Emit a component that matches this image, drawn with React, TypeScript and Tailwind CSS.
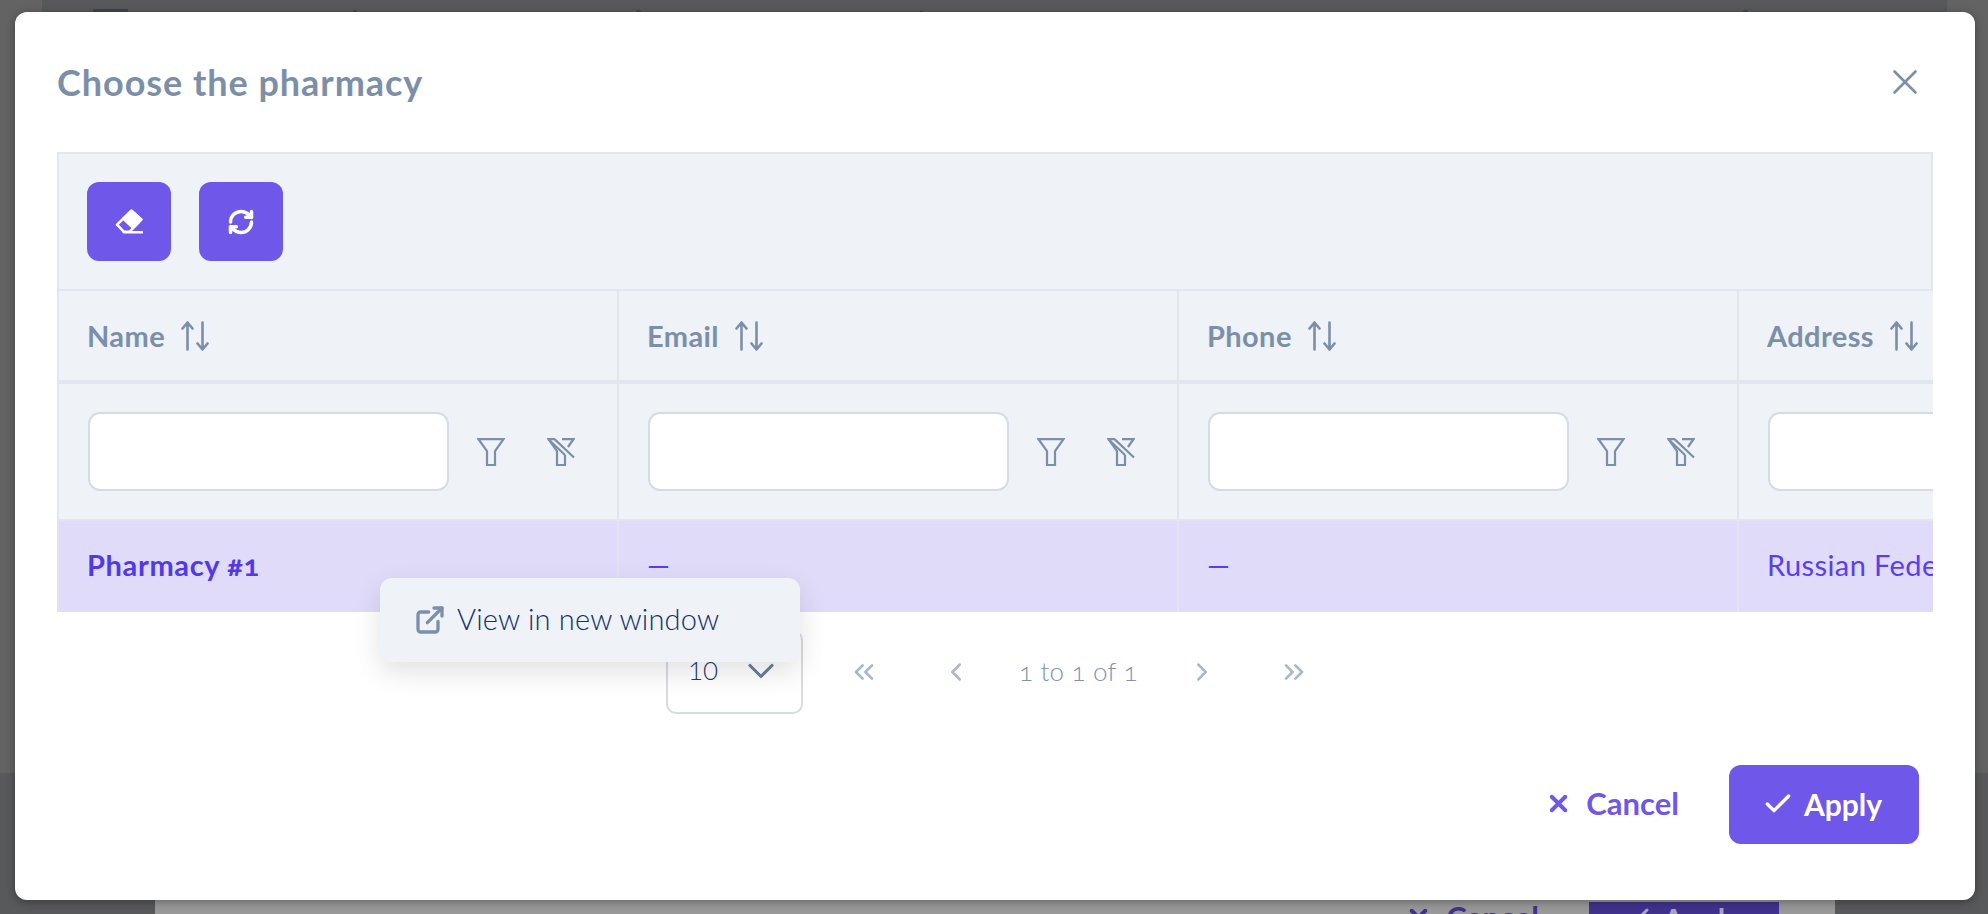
import { Check, ChevronDown, ChevronLeft, ChevronRight, ChevronsLeft, ChevronsRight, ExternalLink, RefreshCw, X } from "lucide-react"

function EraserIcon() {
  return (
    <svg width="28" height="25" viewBox="0 0 28 25" fill="none" stroke="white" strokeWidth="2.6" strokeLinejoin="round" strokeLinecap="round">
      <path d="M16.5 1.8 L26.2 10.5 L14.5 22.8 L9 22.8 L2 15.6 Z" />
      <path d="M16.5 1.8 L26.2 10.5 L18 18.8 L8.2 9.6 Z" fill="white" />
      <path d="M9 23.2 H27" />
    </svg>
  )
}

function SortIcon() {
  return (
    <svg width="28" height="30" viewBox="0 0 28 30" fill="none" stroke="#7b8fa9" strokeWidth="2.6" strokeLinecap="round" strokeLinejoin="round">
      <path d="M6.5 28.5 V1.5 M1.5 7.5 L6.5 1.5 L11.5 7.5" />
      <path d="M21.5 1.5 V28.5 M16.5 22.5 L21.5 28.5 L26.5 22.5" />
    </svg>
  )
}

function FunnelIcon() {
  return (
    <svg width="28" height="28" viewBox="0 0 28 28" fill="none" stroke="#7b8fa9" strokeWidth="2.2">
      <path d="M1.5 1.2 H26.5 L18 13 V27 H10 V13 Z" />
    </svg>
  )
}

function FunnelOffIcon() {
  return (
    <svg width="28" height="28" viewBox="0 0 28 28" fill="none" stroke="#7b8fa9" strokeWidth="2.2">
      <path d="M15 1.2 H26.5 L21 9" />
      <path d="M18 17 V27 H10 V13 L1.5 1.2 H7.5 L27 19.5" />
      <path d="M1.5 1.2 L18 17" />
    </svg>
  )
}

const columns = [
  { name: "Name", value: "Pharmacy #1" },
  { name: "Email", value: "—" },
  { name: "Phone", value: "—" },
  { name: "Address", value: "Russian Federation" },
]

export default function App() {
  return (
    <div className="relative h-[914px] w-[1988px] overflow-hidden bg-[#58595b] font-['Lato',sans-serif]">
      {/* Page behind the dialogs */}
      <div className="absolute left-0 top-0 h-[773px] w-[42px] bg-[#636363]" />
      <div className="absolute right-0 top-0 h-[773px] w-[41px] bg-[#636363]" />
      <div className="absolute left-[93px] top-[9px] h-[3px] w-[35px] bg-[#3f4350]" />
      <div className="absolute left-[353px] top-[10px] h-[2px] w-[4px] rounded-t-full bg-[#3f4350]" />
      <div className="absolute left-[636px] top-[10px] h-[2px] w-[5px] rounded-t-full bg-[#3f4350]" />
      <div className="absolute left-[920px] top-[11px] h-[1px] w-[3px] bg-[#3f4350]" />
      <div className="absolute left-[1743px] top-[10px] h-[2px] w-[5px] rounded-t-full bg-[#3f4350]" />
      <div className="absolute bottom-0 left-[155px] flex h-[40px] w-[1680px] justify-end bg-[#999999] pr-[56px]">
        <div className="flex items-start gap-[50px] pt-[28px]">
          <div className="flex items-center gap-[14px] text-[31px] font-bold leading-none text-[#40318c]">
            <X size={27} strokeWidth={3.5} />
            Cancel
          </div>
          <div className="flex h-[60px] w-[190px] items-start justify-center gap-3 bg-[#40318c] pt-[2px] text-[30px] font-bold leading-none text-[#a9a3cc]">
            <Check size={24} strokeWidth={3} />
            Apply
          </div>
        </div>
      </div>

      {/* Dialog */}
      <div className="absolute left-[15px] top-[12px] flex h-[888px] w-[1960px] flex-col rounded-[12px] bg-white shadow-[0_2px_10px_rgba(0,0,0,0.35)]">
        <div className="flex h-[140px] shrink-0 items-center justify-between pl-[42px] pr-[49px]">
          <h1 className="text-[36px] font-bold leading-none tracking-[0.95px] text-[#7b8fa9]">Choose the pharmacy</h1>
          <X size={42} strokeWidth={1.5} className="text-[#7b8fa9]" />
        </div>

        <div className="mx-[42px] w-[1876px] shrink-0 overflow-hidden bg-[#eff2f7]">
          {/* Toolbar */}
          <div className="flex h-[139px] items-center gap-[28px] border-2 border-[#e0e7f0] pl-[28px]">
            <button className="flex h-[79px] w-[84px] items-center justify-center rounded-[12px] bg-[#6e57e9]">
              <EraserIcon />
            </button>
            <button className="flex h-[79px] w-[84px] items-center justify-center rounded-[12px] bg-[#6e57e9]">
              <RefreshCw size={28} strokeWidth={3} className="text-white" />
            </button>
          </div>

          <div className="grid w-[2241px] grid-cols-[560px_560px_560px_561px]">
            {columns.map((col) => (
              <div key={col.name} className="flex h-[93px] items-center gap-[16px] border-b-4 border-l-2 border-[#e0e7f0] pl-[28px] text-[29px] font-bold leading-none tracking-[0.4px] text-[#7b8fa9]">
                {col.name}
                <SortIcon />
              </div>
            ))}
            {columns.map((col) => (
              <div key={col.name} className="flex h-[135px] items-center border-l-2 border-[#e0e7f0] pl-[29px]">
                <input className="h-[79px] w-[361px] shrink-0 rounded-[12px] border-2 border-[#d5dce6] bg-white" />
                <div className="ml-[28px]">
                  <FunnelIcon />
                </div>
                <div className="ml-[42px]">
                  <FunnelOffIcon />
                </div>
              </div>
            ))}
            {columns.map((col, i) => (
              <div
                key={col.name}
                className={
                  i === 0
                    ? "flex h-[93px] items-center border-l-2 border-t-2 border-[#e2e4f4] bg-[#e0dbf9] pb-[4px] pl-[28px] text-[29px] font-bold leading-none tracking-[0.65px] text-[#5139e8] oldstyle-nums"
                    : "flex h-[93px] items-center border-l-2 border-t-2 border-[#e2e4f4] bg-[#e0dbf9] pb-[4px] pl-[28px] text-[29px] leading-none tracking-[0.4px] text-[#5a3fe8]"
                }
              >
                <span className="whitespace-nowrap">{col.value}</span>
              </div>
            ))}
          </div>
        </div>

        {/* Pagination */}
        <div className="relative mt-[18px] flex h-[83px] shrink-0 items-center pl-[651px] text-[#a9b8ce]">
          <div className="flex h-[84px] w-[137px] items-center justify-between rounded-[10px] border-2 border-[#d5dce6] bg-white pb-[2px] pl-[20px] pr-[18px] text-[26px] font-light text-[#1f3a6e]">
            10
            <ChevronDown size={44} strokeWidth={1.7} className="text-[#6b7f9a]" />
          </div>
          <ChevronsLeft size={32} strokeWidth={2} className="ml-[45px]" />
          <ChevronLeft size={30} strokeWidth={2} className="ml-[61px]" />
          <span className="ml-[48px] text-[26px] tracking-[0.2px] font-light text-[#7f92ad] oldstyle-nums">1 to 1 of 1</span>
          <ChevronRight size={30} strokeWidth={2} className="ml-[49px]" />
          <ChevronsRight size={32} strokeWidth={2} className="ml-[61px]" />

          {/* Row context menu */}
          <div className="absolute left-[365px] top-[-52px] flex h-[84px] w-[420px] items-center rounded-[12px] bg-[#eff2f7] pl-[34px] shadow-[0_10px_28px_rgba(0,0,0,0.12)]">
            <ExternalLink size={32} strokeWidth={2.5} className="text-[#7b8fa9]" />
            <span className="ml-[11px] pb-[4px] text-[29px] font-light leading-none tracking-[0.2px] text-[#12306a]">View in new window</span>
          </div>
        </div>

        {/* Footer */}
        <div className="mt-[52px] flex shrink-0 items-center justify-end pr-[56px]">
          <button className="flex items-center gap-[14px] pb-[2px] text-[31px] font-bold leading-none text-[#6e57e9]">
            <X size={27} strokeWidth={3.5} />
            Cancel
          </button>
          <button className="ml-[50px] flex h-[79px] w-[190px] items-center justify-center gap-[10px] rounded-[12px] bg-[#6e57e9] pb-[2px] pr-[4px] text-[30px] font-bold leading-none text-white">
            <Check size={32} strokeWidth={2.5} />
            Apply
          </button>
        </div>
      </div>
    </div>
  )
}
